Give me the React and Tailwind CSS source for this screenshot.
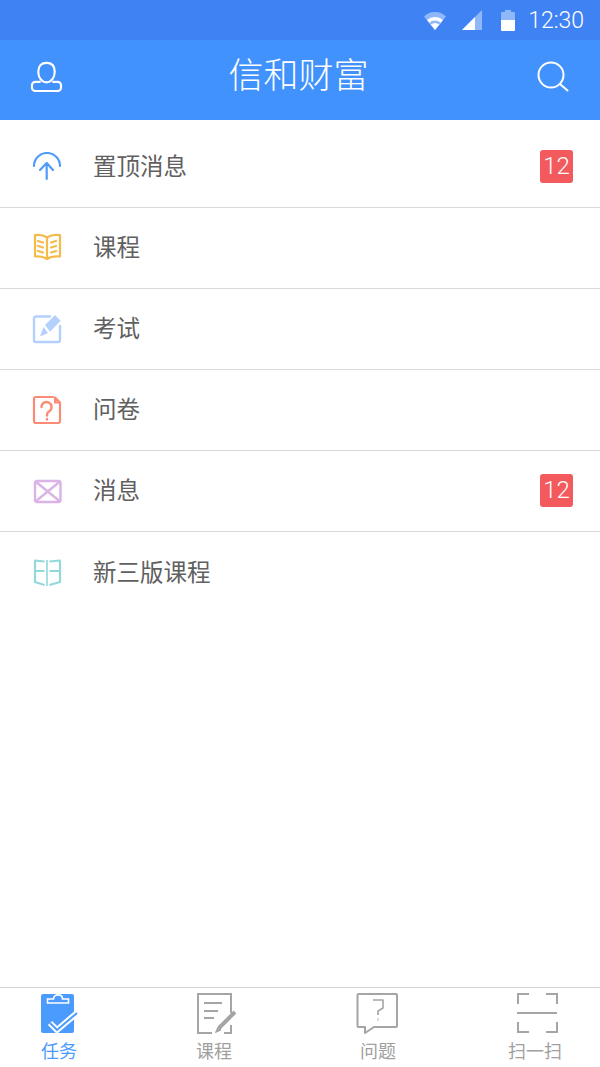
const cjk = "font-['Roboto','Noto_Sans_CJK_SC',sans-serif]"

function UpIcon() {
  return (
    <svg width="30" height="30" viewBox="0 0 30 30" fill="none" stroke="#4f9bfb" strokeWidth="2.2" strokeLinecap="round" strokeLinejoin="round">
      <path d="M2 14A13 13 0 0 1 28 14" />
      <path d="M14.7 11V27M8 18L14.7 11L21 18" />
    </svg>
  )
}

function BookIcon() {
  return (
    <svg width="30" height="30" viewBox="0 0 30 30" fill="none" stroke="#f5bb4a" strokeWidth="2.2" strokeLinecap="round" strokeLinejoin="round">
      <path d="M15 4.5C12 2.5 7 1.5 3 2.2V23.5C7 23 12 24 15 26C18 24 23 23 28 23.5V2.2C23 1.5 18 2.5 15 4.5ZM15 4.5V26" />
      <path d="M6 8L11 9.5M6 13L11 14.5M6 18L11 19.5M19 9.5L24 8M19 14.5L24 13M19 19.5L24 18" />
    </svg>
  )
}

function EditIcon() {
  return (
    <svg width="30" height="30" viewBox="0 0 30 30" fill="none">
      <path d="M18 2.5H4A2 2 0 0 0 2 4.5V26A2 2 0 0 0 4 28H26A2 2 0 0 0 28 26V12" stroke="#b5d0fc" strokeWidth="2.4" strokeLinecap="round" />
      <path d="M13 11L23 1L28.7 6.7L18 17.7Z M11.5 13L16 19L8 22.5Z" fill="#b5d0fc" />
    </svg>
  )
}

function QuestionIcon() {
  return (
    <svg width="30" height="30" viewBox="0 0 30 30" fill="none" stroke="#fb8b74" strokeWidth="2.2" strokeLinecap="round" strokeLinejoin="round">
      <path d="M21 2H4A2 2 0 0 0 2 4V26A2 2 0 0 0 4 28H26A2 2 0 0 0 28 26V8" />
      <path d="M23 2.5L28 7.5H23Z" />
      <path d="M9.5 12A5 5 0 1 1 17.5 16C15.5 17 15 18 15 20.5" strokeWidth="2.4" />
      <path d="M15 24V24.5" strokeWidth="2.4" />
    </svg>
  )
}

function MailIcon() {
  return (
    <svg width="30" height="30" viewBox="0 0 30 30" fill="none" stroke="#dbb3e6" strokeWidth="2.4" strokeLinejoin="round">
      <rect x="3" y="5" width="25.5" height="21" rx="2" />
      <path d="M3.5 5.5L28 25.5M28 5.5L3.5 25.5" />
    </svg>
  )
}

function OpenBookIcon() {
  return (
    <svg width="30" height="30" viewBox="0 0 30 30" fill="none" stroke="#93d8da" strokeWidth="2.2" strokeLinejoin="round">
      <path d="M12.5 3.5L3 2.5V24L12.5 27M3 13H12.5" />
      <path d="M17.5 3.5L28 2.5V24L17.5 27M17.5 13H28" />
      <path d="M15 2V28" strokeWidth="1.6" />
    </svg>
  )
}

function TaskIcon() {
  return (
    <svg width="48" height="44" viewBox="0 0 48 44" fill="none">
      <path d="M8 2H37A2 2 0 0 1 39 4V39A2 2 0 0 1 37 41H8A2 2 0 0 1 6 39V4A2 2 0 0 1 8 2Z" fill="#4a9bfd" />
      <path d="M12.5 11V7H18.5C18.5 1.5 27.5 1.5 27.5 7H33.5V11Z" fill="#4a9bfd" stroke="#fff" strokeWidth="1.6" />
      <path d="M15 31L22 38L42 21" stroke="#fff" strokeWidth="6" />
      <path d="M15 31L22 38L42 21" stroke="#4a9bfd" strokeWidth="2" />
    </svg>
  )
}

function CourseIcon() {
  return (
    <svg width="48" height="44" viewBox="0 0 48 44" fill="none" stroke="#a5a5a5" strokeWidth="2">
      <path d="M41 21V2H8V41H22M34 41H41V33" />
      <path d="M14 11H32M14 19H28M14 26H24" />
      <path d="M45 20L29 36" strokeWidth="4" />
      <path d="M28 35L25.5 40.5L31 38Z" fill="#a5a5a5" strokeWidth="1" />
    </svg>
  )
}

function AskIcon() {
  return (
    <svg width="48" height="44" viewBox="0 0 48 44" fill="none" stroke="#a5a5a5" strokeWidth="2" strokeLinejoin="round">
      <path d="M4.5 2H42A1 1 0 0 1 43 3V34A1 1 0 0 1 42 35H20L11 41V35H4.5A1 1 0 0 1 3.5 34V3A1 1 0 0 1 4.5 2Z" />
      <path d="M19 8H29V16L24 19V23" strokeWidth="1.6" />
      <path d="M24 26.5V29" strokeWidth="1.6" strokeDasharray="1 1" />
    </svg>
  )
}

function ScanIcon() {
  return (
    <svg width="48" height="44" viewBox="0 0 48 44" fill="none" stroke="#a5a5a5" strokeWidth="2">
      <path d="M7 12V2H18M35 2H46V12M7 30V40H18M35 40H46V30" />
      <path d="M6 21H46" />
    </svg>
  )
}

const rows = [
  { label: '置顶消息', icon: <UpIcon />, badge: 12 },
  { label: '课程', icon: <BookIcon /> },
  { label: '考试', icon: <EditIcon /> },
  { label: '问卷', icon: <QuestionIcon /> },
  { label: '消息', icon: <MailIcon />, badge: 12 },
  { label: '新三版课程', icon: <OpenBookIcon />, last: true },
]

function StatusBar() {
  return (
    <div className="flex h-10 items-center justify-end bg-[#3f82f3] pr-4">
      <svg width="24" height="22" viewBox="0 0 24 22" className="mr-[15px]">
        <path d="M1 7.5A16 16 0 0 1 23 7.5L12 21Z" fill="#8fb8f8" />
        <path d="M4 11A12 12 0 0 1 20 11L12 21Z" fill="#fff" />
        <path d="M6.3 13.8A8 8 0 0 1 17.7 13.8L16 15.5A6 6 0 0 0 8 15.5Z" fill="#8fb8f8" />
      </svg>
      <svg width="20" height="20" viewBox="0 0 20 20" className="mr-[19px]">
        <path d="M0 20L20 0V20Z" fill="#8fb8f8" />
        <path d="M0 20L13 7V20Z" fill="#fff" />
      </svg>
      <svg width="14" height="21" viewBox="0 0 14 21" className="mr-[13px]">
        <path d="M4 0H10V2H13A1 1 0 0 1 14 3V20A1 1 0 0 1 13 21H1A1 1 0 0 1 0 20V3A1 1 0 0 1 1 2H4Z" fill="#8fb8f8" />
        <path d="M0 10H14V20A1 1 0 0 1 13 21H1A1 1 0 0 1 0 20Z" fill="#fff" />
      </svg>
      <span className={`${cjk} text-[23px] leading-none font-light text-white`}>12:30</span>
    </div>
  )
}

function Header() {
  return (
    <header className="flex h-20 items-center justify-between bg-[#4192fc] pr-[31px] pb-[7px] pl-[30px]">
      <svg width="33" height="31" viewBox="0 0 34 32" fill="none" stroke="#fff" strokeWidth="2.2">
        <path d="M8.5 11C8.5 5 12 2 17 2S25.5 5 25.5 11S22 22 17 22S8.5 17 8.5 11Z" />
        <path d="M11 21.5H5.5A3.5 3.5 0 0 0 2 25V27.5A3.5 3.5 0 0 0 5.5 31H28.5A3.5 3.5 0 0 0 32 27.5V25A3.5 3.5 0 0 0 28.5 21.5H23" />
      </svg>
      <h1 className={`${cjk} mr-[3px] text-[35px] leading-none font-light text-white`}>信和财富</h1>
      <svg width="32" height="32" viewBox="0 0 32 32" fill="none" stroke="#fff" strokeWidth="2">
        <circle cx="14" cy="14" r="12.5" />
        <path d="M23.5 23.5L30.5 29.5" strokeLinecap="round" />
      </svg>
    </header>
  )
}

function Row({ label, icon, badge, last }) {
  return (
    <div className={`flex h-[81px] items-center pr-[27px] pl-8 first:h-[88px] first:pt-[7px] ${last ? '' : 'border-b border-[#d9d9d9]'}`}>
      {icon}
      <span className={`${cjk} ml-[31px] flex-1 pt-[2px] text-[23.5px] text-[#606060]`}>{label}</span>
      {badge && (
        <span className={`${cjk} mb-[2px] flex h-[33px] w-[33px] items-center justify-center rounded-[3px] bg-[#f25a5e] text-[24px] leading-none font-light text-white`}>
          {badge}
        </span>
      )}
    </div>
  )
}

function Tab({ label, icon, active, className }) {
  return (
    <div className={`flex w-[60px] flex-col items-center ${className}`}>
      <div className="flex h-11 justify-center">{icon}</div>
      <span className={`${cjk} mt-[5px] text-[18px] leading-[22px] ${active ? 'text-[#4a9bfd]' : 'text-[#a0a0a0]'}`}>{label}</span>
    </div>
  )
}

export default function App() {
  return (
    <div className="flex h-[1067px] w-[600px] flex-col overflow-hidden bg-white">
      <StatusBar />
      <Header />
      <main className="flex-1">
        {rows.map((row) => (
          <Row key={row.label} {...row} />
        ))}
      </main>
      <nav className="flex h-20 border-t border-[#d4d4d4] pt-[4px]">
        <Tab label="任务" icon={<TaskIcon />} active className="ml-[29px]" />
        <Tab label="课程" icon={<CourseIcon />} className="ml-[95px]" />
        <Tab label="问题" icon={<AskIcon />} className="ml-[104px]" />
        <Tab label="扫一扫" icon={<ScanIcon />} className="ml-[97px]" />
      </nav>
    </div>
  )
}
